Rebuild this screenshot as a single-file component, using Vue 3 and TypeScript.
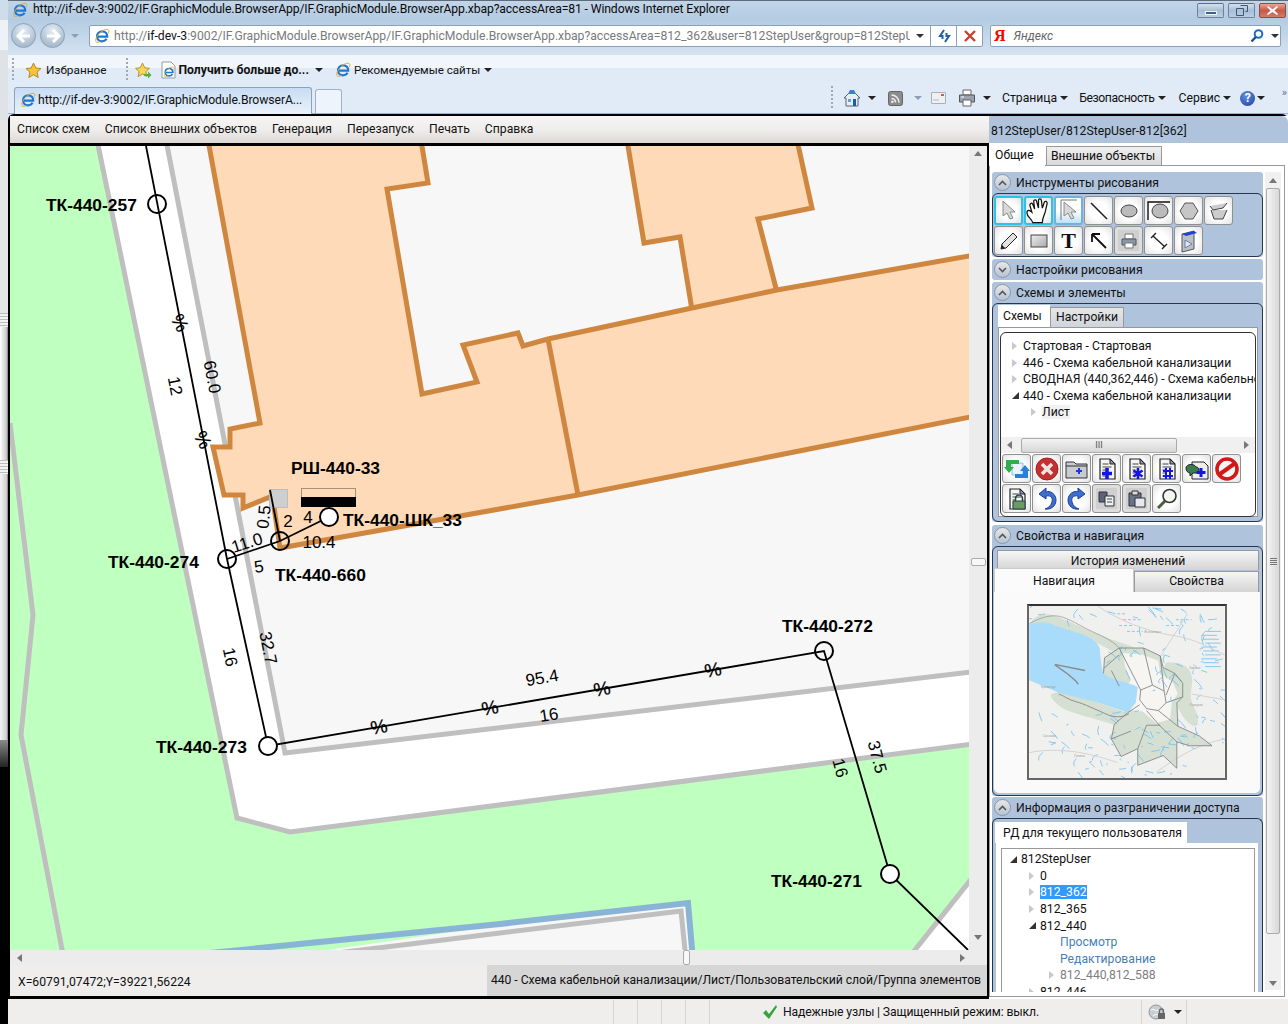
<script setup lang="ts">
interface TreeRow {
  text: string;
  indent: number;
  arrow: "none" | "closed" | "open";
  kind?: string;
}

interface MapLabel {
  text: string;
  x: number;
  y: number;
}

interface DimLabel {
  text: string;
  x: number;
  y: number;
  angle: number;
}

const menuItems: string[] = ["Список схем", "Список внешних объектов", "Генерация", "Перезапуск", "Печать", "Справка"];

const schemeRows: TreeRow[] = [
  { text: "Стартовая - Стартовая", indent: 0, arrow: "closed" },
  { text: "446 - Схема кабельной канализации", indent: 0, arrow: "closed" },
  { text: "СВОДНАЯ (440,362,446) - Схема кабельной канализации", indent: 0, arrow: "closed" },
  { text: "440 - Схема кабельной канализации", indent: 0, arrow: "open" },
  { text: "Лист", indent: 19, arrow: "closed", kind: "hover" },
];

const accessRows: TreeRow[] = [
  { text: "812StepUser", indent: 0, arrow: "open" },
  { text: "0", indent: 19, arrow: "closed" },
  { text: "812_362", indent: 19, arrow: "closed", kind: "selected" },
  { text: "812_365", indent: 19, arrow: "closed" },
  { text: "812_440", indent: 19, arrow: "open" },
  { text: "Просмотр", indent: 39, arrow: "none", kind: "link" },
  { text: "Редактирование", indent: 39, arrow: "none", kind: "link" },
  { text: "812_440,812_588", indent: 39, arrow: "closed", kind: "muted" },
  { text: "812_446", indent: 19, arrow: "closed" },
];

const nodeLabels: MapLabel[] = [
  { text: "ТК-440-257", x: 46, y: 211 },
  { text: "РШ-440-33", x: 291, y: 474 },
  { text: "ТК-440-ШК_33", x: 343, y: 526 },
  { text: "ТК-440-274", x: 108, y: 568 },
  { text: "ТК-440-660", x: 275, y: 581 },
  { text: "ТК-440-273", x: 156, y: 753 },
  { text: "ТК-440-272", x: 782, y: 632 },
  { text: "ТК-440-271", x: 771, y: 887 },
];

const dimLabels: DimLabel[] = [
  { text: "12", x: 175, y: 386, angle: 79 },
  { text: "60.0", x: 212, y: 377, angle: 79 },
  { text: "0.5", x: 264, y: 517, angle: -84 },
  { text: "2", x: 288, y: 521, angle: 0 },
  { text: "4", x: 308, y: 517, angle: 0 },
  { text: "11.0", x: 247, y: 543, angle: -17 },
  { text: "10.4", x: 319, y: 542, angle: 0 },
  { text: "5", x: 259, y: 567, angle: -8 },
  { text: "16", x: 230, y: 657, angle: 78 },
  { text: "32.7", x: 268, y: 648, angle: 78 },
  { text: "95.4", x: 542, y: 678, angle: -10 },
  { text: "16", x: 549, y: 715, angle: -9 },
  { text: "37.5", x: 877, y: 757, angle: 75 },
  { text: "16", x: 840, y: 768, angle: 75 },
];

const cableMarks: DimLabel[] = [
  { text: "%", x: 180, y: 323, angle: 62 },
  { text: "%", x: 203, y: 440, angle: 62 },
  { text: "%", x: 379, y: 727, angle: -10 },
  { text: "%", x: 490, y: 708, angle: -10 },
  { text: "%", x: 602, y: 689, angle: -10 },
  { text: "%", x: 713, y: 670, angle: -10 },
];

const wells: [number, number, string][] = [
  [157, 204, "none"],
  [227, 559, "none"],
  [280, 541, "none"],
  [329, 517, "#fff"],
  [268, 746, "#fff"],
  [824, 651, "none"],
  [890, 874, "#fff"],
];

// мелкие речки на обзорной карте, чтобы не рисовать каждую вручную
let seed = 11;
const rnd = (): number => {
  seed = (seed * 16807) % 2147483647;
  return seed / 2147483647;
};
const miniStreams: string[] = [];
for (let i = 0; i < 190; i++) {
  const x = Math.round(rnd() * 198);
  const y = Math.round(rnd() * 174);
  const inGulf = x < 80 && y > 18 && y < 88;
  if (inGulf || (x < 110 && y > 68 && y < 108)) continue;
  const dx = Math.round(rnd() * 14 - 7);
  const dy = Math.round(rnd() * 12 - 2);
  miniStreams.push(`M${x} ${y}q${dx} ${Math.round(dy / 2)} ${dx + 2} ${dy}`);
}

const miniStripes: number[] = [26, 30, 34, 38, 42, 46, 50, 54, 58, 62];
</script>

<template>
  <div class="screen">
    <svg class="defs" width="0" height="0">
      <defs>
        <symbol id="ie" viewBox="0 0 16 16">
          <path d="M3.4 8.6h9.8c.2-3-2-5.3-5-5.3-3 0-5.2 2.2-5.2 5s2.200 5 5.100 5c2 0 3.600-1 4.500-2.500" fill="none" stroke="#1f78d0" stroke-width="2.2" />
          <path d="M2 13.500C.5 11 5 4.500 9.500 2.200c2.500-1.200 4.800-1.300 5.300.2.300 1-.1 2-.8 3.100M1.800 13.800c1 1 3 .5 4.500-.3" fill="none" stroke="#e0a93a" stroke-width="1" />
        </symbol>
        <symbol id="page" viewBox="0 0 24 24">
          <path d="M5 2h10l5 5v15H5z" fill="#f4f4f4" stroke="#222" stroke-width="1.2" />
          <path d="M15 2v5h5z" fill="#8f8fc0" stroke="#222" />
          <path d="M7.5 7h6M7.5 10h9M7.5 13h3M7.5 16h3M7.5 19h3" stroke="#444" />
        </symbol>
      </defs>
    </svg>

    <div class="behind">
      <div class="behind-a"></div>
      <div class="behind-b"></div>
      <div class="behind-c"></div>
      <div class="behind-b"></div>
      <div class="behind-d"></div>
      <div class="behind-e"></div>
    </div>

    <div class="ie">
      <header class="titlebar">
        <svg class="ico16" width="16" height="16"><use href="#ie" /></svg>
        <span class="title-text">http://if-dev-3:9002/IF.GraphicModule.BrowserApp/IF.GraphicModule.BrowserApp.xbap?accessArea=81 - Windows Internet Explorer</span>
        <div class="win-buttons">
          <span class="win-btn"><i class="glyph-min"></i></span>
          <span class="win-btn">
            <svg width="12" height="11" viewBox="0 0 12 11"><path d="M4.5.5h7v6h-2M.5 3.500h7v7h-7z" fill="none" stroke="#40566e" /></svg>
          </span>
          <span class="win-btn close">
            <svg width="11" height="9" viewBox="0 0 11 9"><path d="M1 0l4.500 3.200L10 0l1 1-3.500 3.500L11 8l-1 1-4.500-3L1 9 0 8l3.500-3.500L0 1z" fill="#fff" /></svg>
          </span>
        </div>
      </header>

      <div class="navbar">
        <span class="nav-round">
          <svg width="16" height="14" viewBox="0 0 16 14"><path d="M8 1L2 7l6 6M2 7h12" fill="none" stroke="#fff" stroke-width="3" /></svg>
        </span>
        <span class="nav-round">
          <svg width="16" height="14" viewBox="0 0 16 14"><path d="M8 1l6 6-6 6M14 7H2" fill="none" stroke="#fff" stroke-width="3" /></svg>
        </span>
        <i class="caret pale"></i>
        <div class="address">
          <svg class="page-ie" width="16" height="16"><use href="#ie" /></svg>
          <span class="url">http://<b>if-dev-3</b>:9002/IF.GraphicModule.BrowserApp/IF.GraphicModule.BrowserApp.xbap?accessArea=812_362&amp;user=812StepUser&amp;group=812StepUser&amp;</span>
          <span class="addr-drop"><i class="caret"></i></span>
          <span class="addr-btn">
            <svg width="16" height="16" viewBox="0 0 16 16"><path d="M8 2L4 8h2.500v3M9 14l4-6h-2.500V5" fill="none" stroke="#1d5fb0" stroke-width="2" /></svg>
          </span>
          <span class="addr-btn">
            <svg width="12" height="12" viewBox="0 0 12 12"><path d="M1 1l10 10M11 1L1 11" stroke="#c8402f" stroke-width="2.4" /></svg>
          </span>
        </div>
        <div class="search">
          <span class="ya">Я</span>
          <span class="search-text">Яндекс</span>
          <svg class="lens" width="14" height="14" viewBox="0 0 14 14"><circle cx="8.5" cy="5" r="3.8" fill="#fff" stroke="#1c6fc0" stroke-width="2" /><path d="M5.800 8L1.500 12.500" stroke="#1c4f90" stroke-width="2.4" /></svg>
          <i class="caret"></i>
        </div>
      </div>

      <div class="favbar">
        <span class="grip"></span>
        <svg class="star" width="17" height="17" viewBox="0 0 17 17"><path d="M8.500 1l2.300 5 5.200.5-3.900 3.600 1.100 5.400-4.700-2.800-4.700 2.800 1.100-5.400L1 6.500 6.200 6z" fill="#f6c437" stroke="#b9852a" /></svg>
        <span class="fav-text">Избранное</span>
        <span class="grip second"></span>
        <svg class="star second" width="17" height="17" viewBox="0 0 17 17"><path d="M7.500 1l2.200 4.800 4.800.5-3.600 3.300 1 5-4.400-2.600-4.400 2.600 1-5L.5 6.300l4.800-.5z" fill="#f3d65c" stroke="#b9952a" /><path d="M9 12h4V9.500l3.500 3.500-3.500 3.500V14H9z" fill="#52b043" /></svg>
        <svg class="mini-page" width="17" height="18" viewBox="0 0 17 18"><path d="M2 1h9l4 4v12H2z" fill="#fff" stroke="#9a9a9a" /></svg>
        <svg class="mini-ie" width="12" height="12"><use href="#ie" /></svg>
        <b class="fav-strong">Получить больше до...</b>
        <i class="caret dark fav-caret"></i>
        <svg class="ico16 fav-ie" width="16" height="16"><use href="#ie" /></svg>
        <span class="fav-text tight">Рекомендуемые сайты</span>
        <i class="caret dark"></i>
      </div>

      <div class="tabbar">
        <div class="tab-active">
          <svg width="16" height="16"><use href="#ie" /></svg>
          <span>http://if-dev-3:9002/IF.GraphicModule.BrowserA...</span>
        </div>
        <div class="tab-new"></div>
        <div class="cmd">
          <span class="grip cmd-grip"></span>
          <svg class="cmd-home" width="18" height="18" viewBox="0 0 18 18"><path d="M1 9l8-8 8 8h-2v8H3V9z" fill="#e8eef6" stroke="#52627a" /><path d="M7 1h4l2 4H5z" fill="#3f7fc8" /><path d="M10 10h3v7h-3z" fill="#1f5aa8" /><path d="M5 10h3v3H5z" fill="#6aa0d8" /></svg>
          <i class="caret dark cmd-c1"></i>
          <svg class="cmd-rss" width="15" height="15" viewBox="0 0 15 15"><rect x=".5" y=".5" width="14" height="14" rx="2" fill="#8b8b8b" stroke="#666" /><path d="M3.500 4c4 0 7.500 3.500 7.500 7.500M3.500 7.500c2.200 0 4 1.800 4 4" fill="none" stroke="#eee" stroke-width="1.6" /><circle cx="4.3" cy="10.7" r="1.3" fill="#eee" /></svg>
          <i class="caret pale cmd-c2"></i>
          <svg class="cmd-mail" width="15" height="12" viewBox="0 0 15 12"><path d="M.5.5h14v11H.5z" fill="#eef0f2" stroke="#aab0b8" /><path d="M10 2h3v2h-3z" fill="#d8584c" /><path d="M2 8h6" stroke="#b5bcc4" /></svg>
          <svg class="cmd-print" width="18" height="18" viewBox="0 0 18 18"><path d="M5 1h8v5H5z" fill="#fff" stroke="#666" /><path d="M1.500 6h15v7h-15z" fill="#9aa3ad" stroke="#555" /><path d="M5 11h8v6H5z" fill="#fff" stroke="#666" /><path d="M3 8h3" stroke="#fff" /></svg>
          <i class="caret dark cmd-c3"></i>
          <span class="cmd-text first">Страница</span><i class="caret dark"></i>
          <span class="cmd-text sec">Безопасность</span><i class="caret dark"></i>
          <span class="cmd-text third">Сервис</span><i class="caret dark"></i>
          <span class="help">?</span><i class="caret dark"></i>
          <span class="chev">»</span>
        </div>
      </div>

      <main class="app">
        <section class="workspace">
          <nav class="menu">
            <span v-for="item in menuItems" :key="item">{{ item }}</span>
          </nav>

          <div class="viewer">
            <svg class="scheme" width="959" height="804" viewBox="10 146 959 804">
              <rect x="10" y="146" width="959" height="804" fill="#bfffbf" />
              <!-- дорога и квартал -->
              <polygon points="97,140 237,818 290,832 980,743 980,671 285,753 166,140" fill="#fff" />
              <polygon points="166,140 285,753 980,671 980,140" fill="#f7f7f7" />
              <polyline points="97,140 237,818 290,832 980,743" class="curb" />
              <polyline points="166,140 285,753 980,671" class="curb" />
              <polyline points="10,423 33,615 21,735 64,960" class="curb" />
              <polygon points="259,960 500,925 688,904 693,960" fill="#f7f7f7" />
              <polyline points="280,960 500,933 681,911 686,960" class="curb" />
              <polyline points="140,960 500,924 688,903 693,960" class="curb blue" />
              <polygon points="980,868 907,960 980,960" fill="#fff" />
              <polyline points="980,868 907,960" class="curb" />

              <!-- здания -->
              <polygon points="627,140 644,243 680,237 692,310 777,292 758,219 812,208 797,140" class="house" />
              <polygon points="208,140 260,423 230,429 230,447 213,447 224,495 243,495 243,508 270,497 274,507 280,548 578,495 980,415 980,254 777,290 692,308 548,339 523,346 518,333 463,345 477,382 422,394 387,189 428,183 421,140" class="house" />
              <line x1="548" y1="339" x2="578" y2="495" class="house-line" />

              <!-- колодцы и кабель -->
              <rect x="269.5" y="489.5" width="18" height="18" fill="#cfcfcf" stroke="#bdbdbd" />
              <rect x="301.5" y="488.5" width="54" height="9" fill="#fedab8" stroke="#a98f78" />
              <rect x="301" y="497" width="55" height="10" fill="#000" />
              <polyline points="146,146 227,559 268,746 824,651 890,874 968,950" class="cable" />
              <polyline points="227,559 280,541 329,517" class="cable" />
              <line x1="270" y1="490" x2="280" y2="541" class="cable" />
              <circle v-for="w in wells" :key="w[0]" :cx="w[0]" :cy="w[1]" r="9" :fill="w[2]" stroke="#000" stroke-width="2" />
              <text
                v-for="m in cableMarks"
                :key="m.x"
                class="mark"
                :transform="`rotate(${m.angle} ${m.x} ${m.y})`"
                :x="m.x"
                :y="m.y"
              >{{ m.text }}</text>
              <text
                v-for="d in dimLabels"
                :key="d.text + d.x"
                class="dim"
                :transform="`rotate(${d.angle} ${d.x} ${d.y})`"
                :x="d.x"
                :y="d.y"
              >{{ d.text }}</text>
              <text v-for="l in nodeLabels" :key="l.text" class="node-label" :x="l.x" :y="l.y">{{ l.text }}</text>
            </svg>

            <div class="vscroll">
              <i class="tri up"></i>
              <span class="v-thumb"></span>
              <i class="tri down"></i>
            </div>
            <div class="hscroll">
              <i class="tri left"></i>
              <span class="h-thumb"></span>
              <i class="tri right"></i>
            </div>
            <span class="corner"></span>
          </div>

          <div class="statusline">
            <span class="coords">X=60791,07472;Y=39221,56224</span>
            <span class="layer">440 - Схема кабельной канализации/Лист/Пользовательский слой/Группа элементов</span>
          </div>
        </section>

        <aside class="panel">
          <div class="panel-title">812StepUser/812StepUser-812[362]</div>
          <div class="panel-tabs">
            <span class="ptab active">Общие</span>
            <span class="ptab">Внешние объекты</span>
          </div>
          <div class="panel-body">
            <div class="stack">
              <div class="group">
                <div class="group-head"><span class="exp"><svg width="9" height="6" viewBox="0 0 9 6"><path d="M1 5l3.500-3.500L8 5" fill="none" stroke="#555" stroke-width="1.6" /></svg></span>Инструменты рисования</div>
                <div class="group-box tools">
                  <button class="tool on">
                    <svg width="20" height="22" viewBox="0 0 20 22"><path d="M4 1v15l4-3 3 6 3-1-3-6h5z" fill="#d8d8d8" stroke="#8a8a8a" /></svg>
                  </button>
                  <button class="tool on">
                    <svg width="26" height="26" viewBox="0 0 26 26"><path d="M7 25c-1-4-6-6-6-10s3-3 5-1L4 7c0-2 2-3 3-1l2 5-1-8c0-2 3-2 3 0l2 7V2c0-2 3-2 3 0l1 8 2-6c1-2 3-1 3 1l-2 9c-1 4-3 6-3 11z" fill="#fff" stroke="#111" stroke-width="1.3" /></svg>
                  </button>
                  <button class="tool hot">
                    <svg width="22" height="24" viewBox="0 0 22 24"><path d="M3 1h16M3 1v20" stroke="#777" /><path d="M6 3v14l4-3 3 6 3-1-3-6h5z" fill="#d8d8d8" stroke="#8a8a8a" /></svg>
                  </button>
                  <button class="tool">
                    <svg width="20" height="20" viewBox="0 0 20 20"><path d="M2 2l16 16" stroke="#222" stroke-width="1.6" /></svg>
                  </button>
                  <button class="tool">
                    <svg width="20" height="16" viewBox="0 0 20 16"><ellipse cx="10" cy="8" rx="8" ry="6" fill="#bbb" stroke="#444" /></svg>
                  </button>
                  <button class="tool">
                    <svg width="24" height="22" viewBox="0 0 24 22"><path d="M1 20V2h22" fill="none" stroke="#111" stroke-width="1.4" /><ellipse cx="13" cy="11" rx="8" ry="7" fill="#bbb" stroke="#444" /></svg>
                  </button>
                  <button class="tool">
                    <svg width="20" height="18" viewBox="0 0 20 18"><path d="M6 1h8l5 8-5 8H6L1 9z" fill="#c6c6c6" stroke="#555" /></svg>
                  </button>
                  <button class="tool">
                    <svg width="22" height="20" viewBox="0 0 22 20"><path d="M2 5l3 4 10-2 4-5M3 9l3 9h9l4-9" fill="#ccc" stroke="#444" /></svg>
                  </button>
                  <button class="tool">
                    <svg width="20" height="20" viewBox="0 0 20 20"><path d="M2 18l1-5L14 2l4 4L7 17z" fill="#e2e2e2" stroke="#222" /><path d="M2 18l1-4 3 3z" fill="#222" /></svg>
                  </button>
                  <button class="tool">
                    <svg width="20" height="16" viewBox="0 0 20 16"><defs><linearGradient id="rg" x2="1" y2="1"><stop offset="0" stop-color="#eee" /><stop offset="1" stop-color="#aaa" /></linearGradient></defs><rect x="2" y="2" width="16" height="12" fill="url(#rg)" stroke="#444" /></svg>
                  </button>
                  <button class="tool t-glyph">T</button>
                  <button class="tool">
                    <svg width="20" height="20" viewBox="0 0 20 20"><path d="M3 3l14 14M3 3h8M3 3v8" fill="none" stroke="#111" stroke-width="1.8" /></svg>
                  </button>
                  <button class="tool pressed">
                    <svg width="16" height="16" viewBox="0 0 16 16"><path d="M4 1h8v5H4z" fill="#fff" stroke="#777" /><path d="M1 6h14v6H1z" fill="#8b97a5" stroke="#556" /><path d="M4 10h8v5H4z" fill="#fff" stroke="#777" /></svg>
                  </button>
                  <button class="tool">
                    <svg width="22" height="22" viewBox="0 0 22 22"><path d="M3 8l5-5M14 19l5-5M5 6l11 10" fill="none" stroke="#222" stroke-width="1.4" /></svg>
                  </button>
                  <button class="tool">
                    <svg width="20" height="24" viewBox="0 0 20 24"><path d="M3 5l12-3v18L3 23z" fill="#b9c0c8" stroke="#555" /><path d="M3 5l12-3 3 2-11 3z" fill="#2440d8" /><path d="M6 11l7 4-7 4z" fill="#e4e8ef" stroke="#6b7fa8" /></svg>
                  </button>
                </div>
              </div>

              <div class="group">
                <div class="group-head"><span class="exp"><svg width="9" height="6" viewBox="0 0 9 6"><path d="M1 1l3.500 3.500L8 1" fill="none" stroke="#555" stroke-width="1.6" /></svg></span>Настройки рисования</div>
              </div>

              <div class="group">
                <div class="group-head"><span class="exp"><svg width="9" height="6" viewBox="0 0 9 6"><path d="M1 5l3.500-3.500L8 5" fill="none" stroke="#555" stroke-width="1.6" /></svg></span>Схемы и элементы</div>
                <div class="group-box schemes">
                  <div class="sub-tabs">
                    <span class="stab active">Схемы</span>
                    <span class="stab">Настройки</span>
                  </div>
                  <div class="sub-card">
                    <div class="scheme-frame">
                      <div class="tree-list">
                        <div v-for="row in schemeRows" :key="row.text" class="tree-row" :style="{ paddingLeft: row.indent + 'px' }">
                          <i :class="['arrow', row.arrow]"></i>
                          <span :class="['tree-text', row.kind]">{{ row.text }}</span>
                        </div>
                      </div>
                      <div class="tree-scroll">
                        <i class="tri left"></i>
                        <span class="tree-thumb"><em>III</em></span>
                        <i class="tri right"></i>
                      </div>
                      <div class="actions">
                        <button class="tool">
                          <svg width="26" height="24" viewBox="0 0 26 24"><path d="M8 6h11v12H8z" fill="#eaf3fb" stroke="#8fb9e4" /><path d="M2 3h13v4H7v3h3l-5 6-5-6h2z" fill="#2fae4a" /><path d="M24 21H11v-4h8v-3h-3l5-6 5 6h-2z" fill="#2a7fd8" /></svg>
                        </button>
                        <button class="tool">
                          <svg width="24" height="24" viewBox="0 0 24 24"><circle cx="12" cy="12" r="11" fill="#c23131" stroke="#a52020" /><path d="M7 7l10 10M17 7L7 17" stroke="#f2e2e2" stroke-width="3.6" /></svg>
                        </button>
                        <button class="tool">
                          <svg width="24" height="20" viewBox="0 0 24 20"><path d="M1 3h8l2 2h11v14H1z" fill="#c8ccd0" stroke="#333" /><path d="M1 7h21" stroke="#333" /><path d="M14 9v6M11 12h6" stroke="#1f39e0" stroke-width="2" /></svg>
                        </button>
                        <button class="tool">
                          <svg width="24" height="24"><use href="#page" /><path d="M12 11v11M7 16.5h10" stroke="#1414e8" stroke-width="3.6" /></svg>
                        </button>
                        <button class="tool">
                          <svg width="24" height="24"><use href="#page" /><path d="M13 11v11M8.500 13.500l9 6M17.500 13.500l-9 6" stroke="#1414e8" stroke-width="2.6" /></svg>
                        </button>
                        <button class="tool">
                          <svg width="24" height="24"><use href="#page" /><path d="M11 11v11M15 11v11M8 14h10M8 19h10" stroke="#1414e8" stroke-width="2" /></svg>
                        </button>
                        <button class="tool">
                          <svg width="26" height="24" viewBox="0 0 26 24"><path d="M8 5h12l4 4v13H8z" fill="#eee" stroke="#222" /><path d="M2 11c0-4 8-5 10-1 4 0 4 6 0 6H9l-3 3v-3c-2 0-4-2-4-5z" fill="#3c7d4c" stroke="#222" /><path d="M17 11v9M12.500 15.500h9" stroke="#1414e8" stroke-width="3" /></svg>
                        </button>
                        <button class="tool">
                          <svg width="24" height="24" viewBox="0 0 24 24"><circle cx="12" cy="12" r="10" fill="#f7f7f7" stroke="#d31818" stroke-width="3.6" /><path d="M5 17L19 7" stroke="#d31818" stroke-width="4" /></svg>
                        </button>
                        <button class="tool">
                          <svg width="24" height="24"><use href="#page" /><path d="M8 14h12v8H8z" fill="#6d9a5f" stroke="#244" /><path d="M10.500 14v-2.500a3.500 3.500 0 017 0V14" fill="none" stroke="#244" stroke-width="1.5" /></svg>
                        </button>
                        <button class="tool">
                          <svg width="22" height="24" viewBox="0 0 22 24"><path d="M10 1L3 7l7 5V9c5-1 7 2 6 6s-4 6-7 7c6 1 11-3 11-9S14 3 10 5z" fill="#3d6fd0" stroke="#1d3f90" /></svg>
                        </button>
                        <button class="tool">
                          <svg width="22" height="24" viewBox="0 0 22 24"><path d="M12 1l7 6-7 5V9C7 8 5 11 6 15s4 6 7 7C7 23 2 19 2 13S8 3 12 5z" fill="#3d6fd0" stroke="#1d3f90" /></svg>
                        </button>
                        <button class="tool pressed">
                          <svg width="18" height="18" viewBox="0 0 18 18"><path d="M1 2h8v10H1z" fill="#5a6478" stroke="#333" /><path d="M7 6h9v10H7z" fill="#eef0f4" stroke="#333" /><path d="M9 9h5M9 12h5" stroke="#445" /></svg>
                        </button>
                        <button class="tool pressed">
                          <svg width="20" height="20" viewBox="0 0 20 20"><path d="M2 4h12v13H2z" fill="#6a7488" stroke="#333" /><path d="M5 2h6v4H5z" fill="#ddd" stroke="#333" /><path d="M8 9h10v9H8z" fill="#e6e9f0" stroke="#333" /></svg>
                        </button>
                        <button class="tool">
                          <svg width="24" height="24" viewBox="0 0 24 24"><circle cx="14.5" cy="9" r="6.5" fill="#f2f7ef" stroke="#333" stroke-width="1.6" /><path d="M10 14l-7 7" stroke="#4c5a40" stroke-width="3" /></svg>
                        </button>
                      </div>
                    </div>
                  </div>
                </div>
              </div>

              <div class="group roomy">
                <div class="group-head"><span class="exp"><svg width="9" height="6" viewBox="0 0 9 6"><path d="M1 5l3.500-3.500L8 5" fill="none" stroke="#555" stroke-width="1.6" /></svg></span>Свойства и навигация</div>
                <div class="group-box props">
                  <div class="history">История изменений</div>
                  <div class="nav-tabs">
                    <span class="ntab active">Навигация</span>
                    <span class="ntab">Свойства</span>
                  </div>
                  <div class="nav-card">
                    <svg class="overview" width="200" height="176" viewBox="0 0 200 176">
                      <rect width="200" height="176" fill="#f0f0ee" />
                      <g fill="#d5e0d2">
                        <path d="M0 20C4 10 14 6 26 10s36 16 58 24 22 6 28 14c-8 4-16 0-28-2-6-4-14-8-24-12S22 16 0 20z" />
                        <path d="M30 88c20 2 42 12 72 22l-14 12c-22-8-50-12-60-22S22 90 30 88z" />
                        <path d="M140 58c18-2 30 6 26 26s10 22 6 38c-8 4-20-14-24-30s-14-24-8-34z" />
                        <path d="M76 69l1-16 15-10 25 0 17 8 3 12 12 6 8 10v14l-6 6 1 24 22 10 13 10-23 0-13-4v27l-14-13-26 10v-17l-17 8-10-18 3-15 14-12-9-10z" />
                      </g>
                      <path d="M96 48l20 2 16 6 2 14 12 6 6 14-6 8-2 18-14 4-14-12-16-2-6-12 4-10 6-8-6-14z" fill="#f6f5f1" />
                      <path d="M0 19c10-3 17-3 24 0s22 7 30 10 16 8 18 14c1 8 1 18 4 26 8 8 26 8 35 14l-2 16-8 10-30-10-40-10L0 76z" fill="#a8dcfa" />
                      <path d="M26 60l14 10c4 4 8 6 10 10M27 60l30 6" fill="none" stroke="#8a8a8a" stroke-width="1.4" />
                      <g fill="none" stroke="#78c4f0" stroke-width=".9">
                        <path v-for="d in miniStreams" :key="d" :d="d" />
                        <path v-for="y in miniStripes" :key="y" :d="`M${176 + (y % 3) * 2} ${y}h${18 - (y % 4)}`" />
                        <path d="M90 8h10M96 14h18M92 20h14M100 26h16M140 20h14M150 14h16" stroke-dasharray="3 2" />
                      </g>
                      <g fill="none" stroke="#d2d2d2" stroke-width="1">
                        <path d="M70 0c20 14 50 26 76 30s40 14 54 20" />
                        <path d="M0 150c30-6 60 0 90 10M130 170c20-14 40-28 70-34M166 90l34 6M134 52l28-44" />
                      </g>
                      <g fill="none" stroke="#838586" stroke-width=".9">
                        <path d="M0 18c8-4 16-8 26-8s22 8 34 14 24 10 32 19" stroke-width=".6" />
                        <path d="M30 90c6 2 10 6 18 8s20 8 34 14c8 2 14 2 20-2" />
                        <path d="M76 69l1-16 15-10 25 0 17 8 3 12 12 6 8 10v14l-6 6 1 24 22 10 13 10-23 0-13-4v27l-14-13-26 10v-17l-17 8-10-18 3-15 14-12" />
                        <path d="M114 86l12-5 12 6 2 12-8 8-12-2-7-9z" />
                        <path d="M92 43l22 43M117 43l9 38M134 51l4 36M149 69l-9 22M157 93l-17 6M152 123l-20-16M134 123l-14-16M101 109l12-8" />
                        <path d="M111 146l9-24h14M151 139l-17-16M84 136l20-8" />
                        <path d="M76 64l16-14M84 66l8 16" />
                      </g>
                      <g fill="#999" font-size="3" font-family="'Liberation Sans', sans-serif">
                        <text x="118" y="28">Всеволожск</text>
                        <text x="164" y="64">Кировск</text>
                        <text x="164" y="102">Отрадное</text>
                        <text x="12" y="84">Кронштадт</text>
                        <text x="14" y="134">Сосновка</text>
                        <text x="46" y="154">Гатчина</text>
                      </g>
                    </svg>
                  </div>
                </div>
              </div>

              <div class="group">
                <div class="group-head"><span class="exp"><svg width="9" height="6" viewBox="0 0 9 6"><path d="M1 5l3.500-3.500L8 5" fill="none" stroke="#555" stroke-width="1.6" /></svg></span>Информация о разграничении доступа</div>
                <div class="group-box access">
                  <span class="access-tab">РД для текущего пользователя</span>
                  <div class="access-card">
                    <div class="access-tree">
                      <div v-for="row in accessRows" :key="row.text" class="tree-row" :style="{ paddingLeft: row.indent + 'px' }">
                        <i :class="['arrow', row.arrow]"></i>
                        <span :class="['tree-text', row.kind]">{{ row.text }}</span>
                      </div>
                    </div>
                  </div>
                </div>
              </div>
            </div>

            <div class="panel-scroll">
              <i class="tri up"></i>
              <span class="panel-thumb"><em></em></span>
              <i class="tri down"></i>
            </div>
          </div>
        </aside>
      </main>

      <footer class="statusbar">
        <span class="sb-cell wide"></span>
        <span class="sb-cell"></span>
        <span class="sb-cell"></span>
        <span class="sb-cell"></span>
        <span class="sb-cell"></span>
        <span class="sb-cell trust">
          <svg width="16" height="16" viewBox="0 0 16 16"><path d="M1 9l3-3 3 4 7-9 1 2-8 12z" fill="#34a63a" /></svg>
          Надежные узлы | Защищенный режим: выкл.
        </span>
        <span class="sb-cell lock">
          <svg width="18" height="16" viewBox="0 0 18 16"><circle cx="8" cy="8" r="7" fill="#c9ced3" stroke="#8f969d" /><path d="M3 6c3-2 4 2 7 0M5 12c2-2 4-1 6-3" stroke="#fff" fill="none" /><rect x="10" y="9" width="7" height="6" fill="#666" /><path d="M11.500 9V7a2 2 0 014 0v2" fill="none" stroke="#666" stroke-width="1.3" /></svg>
          <i class="caret dark"></i>
        </span>
        <span class="sb-rest"></span>
      </footer>
    </div>
  </div>
</template>

<style>
body {
  margin: 0;
  background: #000;
}
</style>

<style scoped>
.screen {
  width: 1288px;
  height: 1024px;
  display: flex;
  overflow: hidden;
  font-family: Roboto, "Noto Sans", sans-serif;
  font-size: 12.2px;
  color: #111;
}
.defs {
  position: absolute;
}
.behind {
  width: 8px;
  flex: none;
  display: flex;
  flex-direction: column;
  background: #000;
}
.behind-a {
  height: 313px;
  background: linear-gradient(#cfdcea 0 20px, #eef1f5 20px 50px, #dfe3e8 50px 120px, #e6e6e6 120px);
}
.behind-b {
  height: 14px;
  background: repeating-linear-gradient(#bbb 0 1px, #f2f2f2 1px 3px);
}
.behind-c {
  height: 133px;
  background: linear-gradient(90deg, #fff, #c9c9c9 80%, #777);
}
.behind-d {
  height: 266px;
  background: linear-gradient(90deg, #f4f4f4, #d0d0d0 80%, #777);
}
.behind-e {
  height: 27px;
  background: linear-gradient(#8a8a8a, #222);
}
.ie {
  width: 1280px;
  flex: none;
  display: flex;
  flex-direction: column;
  background: #dfe9f5;
}

/* заголовок окна */
.titlebar {
  height: 20px;
  flex: none;
  display: flex;
  align-items: center;
  padding-left: 4px;
  background: linear-gradient(#5d6b7b 0 1px, #c3d5e8 1px, #b3cbe2);
}
.ico16 {
  flex: none;
}
.title-text {
  margin-left: 5px;
  margin-bottom: 2px;
  white-space: nowrap;
  letter-spacing: -0.12px;
  color: #0a0a0a;
}
.win-buttons {
  margin-left: auto;
  margin-right: 2px;
  display: flex;
  gap: 4px;
}
.win-btn {
  width: 27px;
  height: 15px;
  display: flex;
  align-items: center;
  justify-content: center;
  border: 1px solid #6f8299;
  border-top-color: #5b6d83;
  border-radius: 2px;
  box-sizing: border-box;
  background: linear-gradient(#d3e0ed, #a6bfd8 50%, #b9cee2);
}
.win-btn.close {
  background: linear-gradient(#e8a697, #c65a45 50%, #d27c68);
  border-color: #8d4a3d;
}
.glyph-min {
  width: 10px;
  height: 2px;
  margin-top: 5px;
  background: #4a5f78;
  border: 1px solid #eef3f8;
}

.navbar {
  height: 35px;
  flex: none;
  display: flex;
  align-items: flex-start;
  padding: 3px 0 0 3px;
  box-sizing: border-box;
  background: linear-gradient(#b5cce3, #d5e3f1);
}
.nav-round {
  width: 25px;
  height: 25px;
  margin: 0 2px;
  flex: none;
  border-radius: 50%;
  display: flex;
  align-items: center;
  justify-content: center;
  border: 1px solid #8ba1b8;
  background: radial-gradient(circle at 50% 30%, #e6eef6, #a9bbcd 75%);
  box-sizing: border-box;
}
.nav-round:first-child {
  margin-left: 0;
}
.caret {
  display: inline-block;
  width: 0;
  height: 0;
  flex: none;
  border-left: 4px solid transparent;
  border-right: 4px solid transparent;
  border-top: 4px solid #333;
}
.caret.pale {
  border-top-color: #8ba0b6;
  margin: 11px 0 0 4px;
}
.caret.dark {
  border-top-color: #222;
}
.address {
  width: 894px;
  height: 22px;
  margin: 2px 0 0 10px;
  flex: none;
  display: flex;
  align-items: center;
  box-sizing: border-box;
  border: 1px solid #8aa0b8;
  border-radius: 2px;
  background: #fff;
}
.page-ie {
  margin-left: 4px;
  flex: none;
}
.url {
  flex: 1;
  min-width: 0;
  margin-left: 4px;
  overflow: hidden;
  white-space: nowrap;
  color: #7a7a7a;
}
.url b {
  color: #111;
  font-weight: 400;
}
.addr-drop {
  width: 20px;
  flex: none;
  display: flex;
  justify-content: center;
}
.addr-btn {
  width: 25px;
  height: 20px;
  flex: none;
  display: flex;
  align-items: center;
  justify-content: center;
  border-left: 1px solid #8aa0b8;
}
.search {
  width: 291px;
  height: 22px;
  margin: 2px 0 0 7px;
  flex: none;
  display: flex;
  align-items: center;
  box-sizing: border-box;
  border: 1px solid #8aa0b8;
  border-radius: 2px;
  background: #fff;
  padding: 0 1px 0 3px;
}
.ya {
  color: #f00;
  font-family: "Liberation Serif", serif;
  font-weight: 700;
  font-size: 16px;
}
.search-text {
  margin-left: 8px;
  font-style: italic;
  font-size: 12px;
  color: #666;
}
.lens {
  margin-left: auto;
  margin-right: 7px;
}

.favbar {
  height: 30px;
  flex: none;
  display: flex;
  align-items: center;
  padding-left: 4px;
  box-sizing: border-box;
  background: linear-gradient(#f1f6fc 0 13px, #e1ebf7 13px);
}
.grip {
  width: 2px;
  height: 24px;
  flex: none;
  background: repeating-linear-gradient(#9fa9b5 0 2px, transparent 2px 4px);
}
.star {
  margin-left: 11px;
  flex: none;
}
.star.second {
  margin-left: 7px;
}
.fav-text {
  margin-left: 4px;
  font-size: 11.8px;
  white-space: nowrap;
}
.fav-text.tight {
  margin-left: 3px;
  margin-right: 4px;
  font-size: 11.6px;
}
.grip.second {
  margin-left: 20px;
}
.mini-page {
  margin-left: 8px;
  flex: none;
}
.mini-ie {
  margin-left: -14px;
  margin-top: 3px;
  flex: none;
}
.fav-strong {
  margin-left: 3px;
  white-space: nowrap;
}
.fav-caret {
  margin-left: 6px;
}
.fav-ie {
  margin-left: 12px;
}

.tabbar {
  height: 29px;
  flex: none;
  display: flex;
  align-items: flex-end;
  padding-left: 6px;
  box-sizing: border-box;
  border-bottom: 1px solid #9fb2c7;
  background: #e1ebf7;
}
.tab-active {
  width: 298px;
  height: 27px;
  margin-bottom: -1px;
  flex: none;
  display: flex;
  align-items: center;
  gap: 2px;
  padding: 0 0 3px 5px;
  box-sizing: border-box;
  border: 1px solid #8fa3b8;
  border-bottom: 0;
  border-radius: 3px 3px 0 0;
  background: linear-gradient(#c8dcf3, #eaf2fb);
  white-space: nowrap;
  letter-spacing: -0.08px;
}
.tab-new {
  width: 27px;
  height: 24px;
  margin-left: 3px;
  flex: none;
  border: 1px solid #9fb2c7;
  border-bottom: 0;
  border-radius: 3px 3px 0 0;
  box-sizing: border-box;
  background: #eef4fb;
}
.cmd {
  margin-left: auto;
  margin-bottom: 3px;
  height: 24px;
  display: flex;
  align-items: center;
  white-space: nowrap;
  position: relative;
  width: 457px;
}
.cmd-grip {
  margin-right: 10px;
}
.cmd-home {
  flex: none;
}
.cmd-c1 {
  margin-left: 7px;
}
.cmd-rss {
  margin-left: 12px;
  flex: none;
}
.cmd-c2 {
  margin: 0 0 0 11px !important;
}
.cmd-mail {
  margin-left: 9px;
  flex: none;
}
.cmd-print {
  margin-left: 12px;
  flex: none;
}
.cmd-c3 {
  margin-left: 7px;
}
.cmd-text {
  margin-right: 3px;
}
.cmd-text.first {
  margin-left: 11px;
}
.cmd-text.sec {
  margin-left: 11px;
  letter-spacing: -0.4px;
}
.cmd-text.third {
  margin-left: 13px;
}
.help {
  width: 15px;
  height: 15px;
  margin: 0 2px 0 9px;
  flex: none;
  border-radius: 50%;
  text-align: center;
  line-height: 15px;
  color: #fff;
  font-weight: 700;
  background: radial-gradient(circle at 40% 30%, #5f8fe0, #1c3f99);
}
.chev {
  position: absolute;
  right: 1px;
  top: 0;
  font-size: 11px;
  color: #6a7a8c;
}

/* приложение */
.app {
  height: 885px;
  flex: none;
  display: flex;
  box-sizing: border-box;
  border-top: 2px solid #000;
  border-left: 2px solid #000;
  border-radius: 6px 6px 0 0;
  background: #fff;
}
.workspace {
  width: 979px;
  flex: none;
  display: flex;
  flex-direction: column;
  box-sizing: border-box;
  border-right: 2px solid #000;
  border-bottom: 3px solid #000;
}
.menu {
  height: 30px;
  flex: none;
  display: flex;
  align-items: center;
  gap: 15px;
  padding: 0 0 2px 7px;
  box-sizing: border-box;
  background: linear-gradient(#f7f5f3, #f0eeec 50%, #dcd8d6);
  border-bottom: 3px solid #000;
  margin-right: -2px;
}
.viewer {
  display: grid;
  grid-template-columns: 959px 18px;
  grid-template-rows: 804px 15px;
}
.scheme {
  display: block;
}
.curb {
  fill: none;
  stroke: #bfbfbf;
  stroke-width: 5;
}
.curb.blue {
  stroke: #8ab4d6;
  stroke-width: 6;
}
.house {
  fill: #fedab8;
  stroke: #cf873f;
  stroke-width: 5;
}
.house-line {
  stroke: #cf873f;
  stroke-width: 5;
}
.cable {
  fill: none;
  stroke: #000;
  stroke-width: 1.8;
}
.mark {
  font-family: "Liberation Sans", sans-serif;
  font-size: 19px;
  text-anchor: middle;
  dominant-baseline: central;
  stroke: #000;
  stroke-width: 0.2;
}
.dim {
  font-family: "Liberation Sans", sans-serif;
  font-size: 17px;
  text-anchor: middle;
  dominant-baseline: central;
}
.node-label {
  font-family: "Liberation Sans", sans-serif;
  font-size: 17.4px;
  font-weight: 700;
}
.vscroll {
  display: flex;
  flex-direction: column;
  align-items: center;
  background: #ececec;
  padding: 5px 0 0;
}
.v-thumb {
  width: 15px;
  height: 8px;
  margin: 402px 0 369px;
  border: 1px solid #aaa;
  border-radius: 2px;
  background: #f8f8f8;
  box-sizing: border-box;
}
.hscroll {
  display: flex;
  align-items: center;
  background: #ececec;
  padding-left: 7px;
}
.h-thumb {
  width: 7px;
  height: 15px;
  margin: 0 270px 0 661px;
  border: 1px solid #aaa;
  border-radius: 2px;
  background: #f8f8f8;
  box-sizing: border-box;
}
.corner {
  background: #ececec;
}
.tri {
  display: block;
  width: 0;
  height: 0;
  flex: none;
  border: 4px solid transparent;
}
.tri.up {
  border-top: 0;
  border-bottom: 5px solid #777;
}
.tri.down {
  border-bottom: 0;
  border-top: 5px solid #777;
}
.tri.left {
  border-left: 0;
  border-right: 5px solid #777;
}
.tri.right {
  border-right: 0;
  border-left: 5px solid #777;
}
.statusline {
  flex: 1;
  display: flex;
  background: #f0eeed;
}
.coords {
  width: 477px;
  flex: none;
  box-sizing: border-box;
  padding: 10px 0 0 8px;
}
.layer {
  flex: 1;
  background: #d6d6d6;
  padding: 8px 0 0 4px;
  white-space: nowrap;
  letter-spacing: -0.05px;
}

/* правая панель */
.panel {
  width: 299px;
  flex: none;
  display: flex;
  flex-direction: column;
  background: #fff;
}
.panel-title {
  height: 27px;
  flex: none;
  padding: 8px 0 0 2px;
  box-sizing: border-box;
  background: #afc3dc;
  border-radius: 0 6px 0 0;
}
.panel-tabs {
  height: 23px;
  flex: none;
  display: flex;
  align-items: flex-end;
  margin-bottom: -1px;
}
.ptab {
  width: 110px;
  height: 19px;
  padding: 0 0 0 4px;
  margin-left: 1px;
  border: 1px solid #999;
  border-bottom: 0;
  line-height: 19px;
  background: linear-gradient(#f0f0f0, #d8d8d8);
  white-space: nowrap;
}
.ptab.active {
  width: 49px;
  height: 22px;
  margin-left: 0;
  padding-left: 5px;
  line-height: 22px;
  z-index: 1;
  background: #fff;
  border-color: #fff;
}
.panel-body {
  width: 296px;
  height: 832px;
  flex: none;
  display: flex;
  box-sizing: border-box;
  border: 1px solid #999;
  padding: 6px 0 0 2px;
  gap: 2px;
}
.stack {
  width: 271px;
  height: 820px;
  flex: none;
  display: flex;
  flex-direction: column;
  gap: 2px;
  overflow: hidden;
}
.group {
  flex: none;
  border-radius: 3px;
  background: #afc3dc;
}
.group.roomy {
  margin-top: 1px;
  margin-bottom: -1px;
}
.group-head {
  height: 21px;
  display: flex;
  align-items: center;
  gap: 5px;
  padding-left: 2px;
}
.exp {
  width: 17px;
  height: 17px;
  box-sizing: border-box;
  border: 1px solid #8a97a6;
  border-radius: 50%;
  display: flex;
  align-items: center;
  justify-content: center;
  background: linear-gradient(#e8e8e8, #b6c3d3);
}
.group-box {
  box-sizing: border-box;
  border: 1px solid #26364c;
  border-radius: 6px;
  background: #afc3dc;
}
.tools {
  height: 64px;
  padding: 2px 1px;
  display: grid;
  grid-template-columns: repeat(8, 30px);
  grid-auto-rows: 30px;
}
.tool {
  width: 29px;
  height: 29px;
  padding: 0;
  display: flex;
  align-items: center;
  justify-content: center;
  border: 1px solid #909090;
  border-radius: 3px;
  background: radial-gradient(circle, #fff 45%, #e2e2e2);
}
.tool.on {
  border: 2px solid #28c5e8;
}
.tool.hot {
  border: 2px solid #6fb0e0;
  background: linear-gradient(#fff 50%, #bfe0f6);
}
.tool.pressed {
  background: #cfcfcf;
  box-shadow: inset 0 0 0 3px #dedede;
}
.t-glyph {
  font-family: "Liberation Serif", serif;
  font-weight: 700;
  font-size: 22px;
  color: #111;
}
.schemes {
  height: 219px;
  padding: 2px 4px 0 5px;
}
.sub-tabs {
  height: 21px;
  display: flex;
  align-items: flex-end;
}
.stab {
  height: 19px;
  padding: 0 5px;
  border: 1px solid #999;
  border-bottom: 0;
  line-height: 19px;
  background: linear-gradient(#e6e6e6, #cfd5dc);
}
.stab.active {
  width: 40px;
  height: 21px;
  padding-left: 4px;
  padding-right: 6px;
  line-height: 21px;
  background: #fff;
  border-color: #fff;
}
.sub-card {
  height: 190px;
  box-sizing: border-box;
  background: #fff;
  border: 1px solid #999;
  padding: 4px 1px 0;
}
.scheme-frame {
  height: 185px;
  box-sizing: border-box;
  border: 1px solid #333;
  border-radius: 6px;
  overflow: hidden;
}
.tree-list {
  height: 104px;
  box-sizing: border-box;
  padding: 5px 0 0 11px;
  overflow: hidden;
}
.tree-row {
  height: 16.5px;
  display: flex;
  align-items: center;
  white-space: nowrap;
}
.arrow {
  width: 0;
  height: 0;
  flex: none;
  margin-right: 6px;
  border-style: solid;
  border-width: 4px 0 4px 5px;
  box-sizing: content-box;
}
.arrow.none {
  border-color: transparent;
}
.arrow.closed {
  border-color: transparent transparent transparent #c8c8c8;
}
.arrow.open {
  border-width: 0 0 7px 7px;
  margin-right: 4px;
  border-color: transparent transparent #333 transparent;
}
.tree-text.hover {
  background: #f2f2f2;
}
.tree-text.selected {
  background: #3399ff;
  color: #fff;
}
.tree-text.link {
  color: #4a7fb5;
}
.tree-text.muted {
  color: #808080;
}
.tree-scroll {
  height: 16px;
  display: flex;
  align-items: center;
  padding: 0 6px;
  background: #f0f0f0;
  justify-content: space-between;
}
.tree-thumb {
  width: 156px;
  height: 15px;
  margin: 0 auto 0 9px;
  border: 1px solid #aaa;
  border-radius: 2px;
  box-sizing: border-box;
  background: linear-gradient(#f4f4f4, #d6d6d6);
  text-align: center;
  font-size: 9px;
  line-height: 13px;
}
.tree-thumb em {
  font-style: normal;
  color: #555;
}
.actions {
  padding: 1px 0 0 1px;
  display: grid;
  grid-template-columns: repeat(8, 30px);
  grid-auto-rows: 30px;
}
.props {
  height: 250px;
  padding: 3px 2px 0 1px;
}
.history {
  width: 262px;
  height: 20px;
  margin-left: 3px;
  box-sizing: border-box;
  border: 1px solid #999;
  border-bottom: 0;
  text-align: center;
  line-height: 20px;
  background: linear-gradient(#f6f6f6, #d4d4d4);
}
.nav-tabs {
  height: 24px;
  margin-top: -2px;
  display: flex;
  align-items: flex-end;
}
.ntab {
  width: 125px;
  height: 21px;
  box-sizing: border-box;
  border: 1px solid #999;
  border-bottom: 0;
  text-align: center;
  line-height: 19px;
  background: linear-gradient(#f6f6f6, #d4d4d4);
}
.ntab.active {
  width: 140px;
  height: 24px;
  line-height: 24px;
  background: #fbfbfb;
  border-color: #ccc;
  z-index: 1;
}
.nav-card {
  width: 266px;
  height: 201px;
  box-sizing: border-box;
  padding: 12px 0 0 33px;
  background: #fafafa;
  border-radius: 0 0 5px 5px;
}
.overview {
  display: block;
  box-sizing: border-box;
  border: 2px solid #666;
  border-top-color: #333;
}
.access {
  height: 200px;
  padding: 3px 4px 0 2px;
  border-bottom: 0;
}
.access-tab {
  display: block;
  width: 192px;
  height: 21px;
  box-sizing: border-box;
  padding-left: 8px;
  line-height: 23px;
  background: #fff;
  white-space: nowrap;
}
.access-card {
  height: 160px;
  background: #fff;
  padding: 5px 3px 0 5px;
  margin-left: 1px;
}
.access-tree {
  height: 155px;
  box-sizing: border-box;
  padding: 2px 0 0 8px;
  border: 1px solid #999;
  border-bottom: 0;
  overflow: hidden;
}
.access-tree .tree-row {
  height: 16.6px;
}
.panel-scroll {
  width: 16px;
  height: 818px;
  flex: none;
  display: flex;
  flex-direction: column;
  align-items: center;
  padding-top: 6px;
  box-sizing: border-box;
  background: #f0f0f0;
}
.panel-thumb {
  width: 14px;
  height: 746px;
  margin: 5px 0 47px;
  display: flex;
  align-items: center;
  justify-content: center;
  box-sizing: border-box;
  border: 1px solid #aaa;
  border-radius: 2px;
  background: linear-gradient(90deg, #f4f4f4, #d8d8d8);
}
.panel-thumb em {
  width: 7px;
  height: 7px;
  background: repeating-linear-gradient(#777 0 1px, transparent 1px 2px);
}

/* статусная строка IE */
.statusbar {
  height: 25px;
  flex: none;
  display: flex;
  background: #f0eeed;
  padding-top: 1px;
  box-sizing: border-box;
}
.sb-cell {
  width: 24px;
  box-sizing: border-box;
  border-right: 1px solid #d8d6d5;
  display: flex;
  align-items: center;
}
.sb-cell.wide {
  width: 606px;
}
.sb-cell.trust {
  width: 432px;
  padding-left: 52px;
  gap: 5px;
  white-space: nowrap;
  letter-spacing: -0.13px;
}
.sb-cell.lock {
  width: 45px;
  padding-left: 6px;
  gap: 8px;
}
.sb-rest {
  flex: 1;
}
</style>
